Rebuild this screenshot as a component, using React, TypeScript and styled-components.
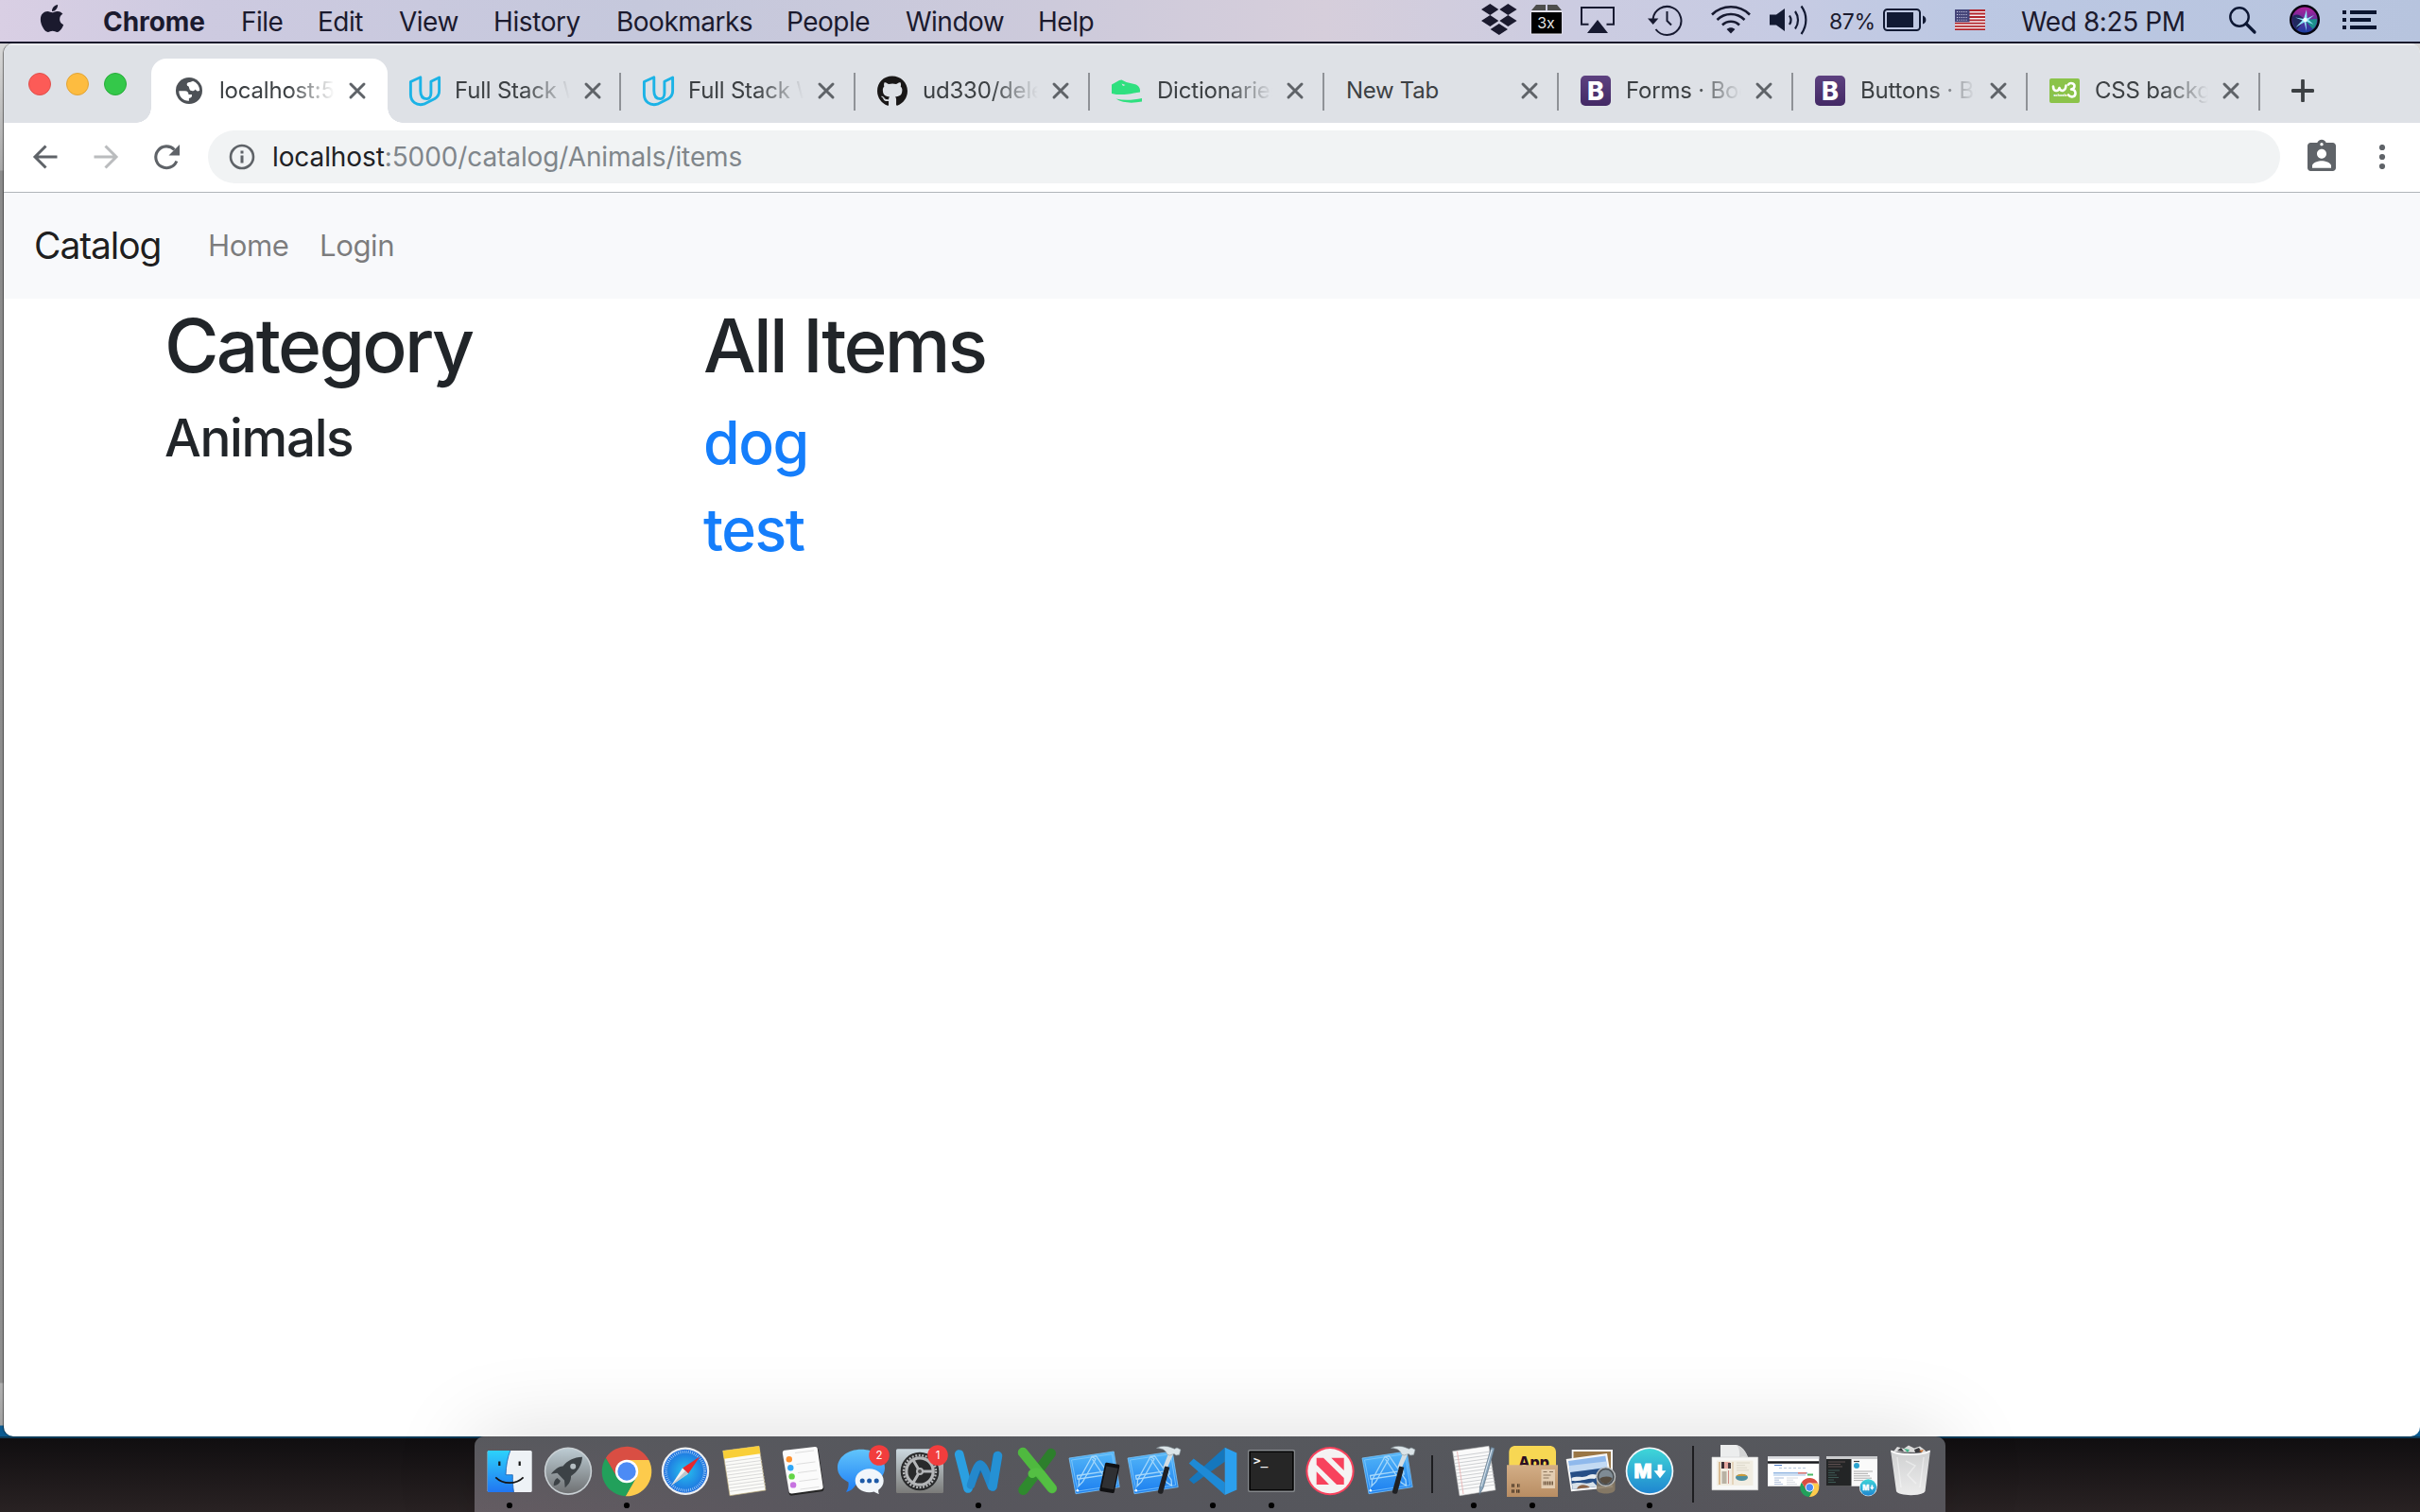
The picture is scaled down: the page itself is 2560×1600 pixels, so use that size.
import React from "react";
import styled, { createGlobalStyle } from "styled-components";
import { FaApple, FaGithub } from "react-icons/fa";
import { MdAssignmentInd } from "react-icons/md";

const GlobalStyle = createGlobalStyle`
  html, body { margin: 0; padding: 0; background: #1b181a; }
  * { box-sizing: border-box; }
  body { font-family: Inter, "Liberation Sans", sans-serif; overflow: hidden; }
`;

/* ---------- shell ---------- */

const Screen = styled.div`
  width: 2560px;
  height: 1600px;
  display: flex;
  flex-direction: column;
  overflow: hidden;
  background: #1b181a;
`;

const MenuBar = styled.header`
  display: flex;
  align-items: center;
  height: 46px;
  flex: none;
  padding: 0 46px 2px 41px;
  border-bottom: 2px solid #17162c;
  color: #1b1a2e;
  background: linear-gradient(90deg, #d9cfe4 0, #cdcae0 220px, #c5c8dc 680px, #cdcadb 1120px, #d6cedb 1400px, #cccce1 1660px, #c6cbe3 1900px, #bcc8e3 2080px, #b7c4de 2560px);
`;

const AppleMark = styled(FaApple)`
  width: 28px;
  height: 33px;
  margin: -4px 0 0;
`;

const MenuItem = styled.span<{ $gap: number; $w: number; $ls?: number; $bold?: boolean; $size?: number }>`
  flex: none;
  margin-left: ${(p) => p.$gap}px;
  padding-top: 3px;
  width: ${(p) => p.$w}px;
  font-size: ${(p) => p.$size ?? 28}px;
  line-height: 40px;
  font-weight: ${(p) => (p.$bold ? 700 : 400)};
  letter-spacing: ${(p) => p.$ls ?? -0.5}px;
  white-space: nowrap;
`;

const Spacer = styled.div`
  flex: 1;
`;

const StatusIcon = styled.svg<{ $gap: number }>`
  display: block;
  flex: none;
  margin-left: ${(p) => p.$gap}px;
  overflow: visible;
`;

const Desktop = styled.div`
  display: flex;
  height: 1474px;
  flex: none;
  background: linear-gradient(180deg, #d8d8d8 0, #a9a9a9 134px, #8b8b8b 135px, #8f8f8f 1417px, #b0b0b0 1418px, #a2a2a2 1462px, #0c5b90 1463px);
`;

const Window = styled.main`
  margin-left: 4px;
  flex: 1;
  display: flex;
  flex-direction: column;
  overflow: hidden;
  border-radius: 10px;
  background: #fff;
  box-shadow: -1px 0 1px rgba(0, 0, 0, 0.45);
`;

/* ---------- tab strip ---------- */

const TabStrip = styled.div`
  display: flex;
  height: 84px;
  flex: none;
  background: #dee1e6;
  border-top: 2px solid #eceef0;
`;

const Lights = styled.div`
  display: flex;
  gap: 16px;
  width: 156px;
  padding: 29px 0 0 26px;
  flex: none;
`;

const Light = styled.i<{ $c: string; $b: string }>`
  width: 24px;
  height: 24px;
  border-radius: 50%;
  background: ${(p) => p.$c};
  border: 1px solid ${(p) => p.$b};
`;

const Tab = styled.div<{ $active?: boolean; $w?: number }>`
  position: relative;
  display: flex;
  align-items: center;
  flex: none;
  width: ${(p) => p.$w ?? 248}px;
  height: ${(p) => (p.$active ? 68 : 40)}px;
  margin-top: ${(p) => (p.$active ? 14 : 29)}px;
  padding-left: ${(p) => (p.$active ? 24 : 23)}px;
  padding-bottom: ${(p) => (p.$active ? 0 : 2)}px;
  background: ${(p) => (p.$active ? "#fff" : "transparent")};
  border-radius: ${(p) => (p.$active ? "16px 16px 0 0" : "0")};
  border-right: ${(p) => (p.$active ? "0" : "2px solid #8f9297")};
  &::before, &::after {
    content: "";
    display: ${(p) => (p.$active ? "block" : "none")};
    position: absolute;
    bottom: 0;
    width: 16px;
    height: 16px;
  }
  &::before {
    left: -16px;
    background: radial-gradient(circle at 0 0, transparent 15.5px, #fff 16px);
  }
  &::after {
    right: -16px;
    background: radial-gradient(circle at 100% 0, transparent 15.5px, #fff 16px);
  }
`;

const Favicon = styled.svg`
  display: block;
  width: 33px;
  height: 32px;
  margin-right: 15px;
  flex: none;
  overflow: visible;
`;

const GithubMark = styled(FaGithub)`
  width: 32px;
  height: 33px;
  margin-right: 16px;
  flex: none;
  color: #191717;
`;

const TabTitle = styled.span<{ $w?: number; $fade?: boolean; $ls?: number }>`
  width: ${(p) => p.$w ?? 122}px;
  overflow: hidden;
  white-space: nowrap;
  font-size: 24px;
  line-height: 34px;
  letter-spacing: ${(p) => p.$ls ?? -0.2}px;
  color: #3c4043;
  -webkit-mask-image: ${(p) => (p.$fade === false ? "none" : "linear-gradient(90deg, #000 60%, transparent 100%)")};
  mask-image: ${(p) => (p.$fade === false ? "none" : "linear-gradient(90deg, #000 60%, transparent 100%)")};
`;

const CloseGlyph = styled.svg`
  width: 18px;
  height: 18px;
  margin-left: 15px;
  flex: none;
  overflow: visible;
`;

const NewTab = styled.svg`
  width: 24px;
  height: 24px;
  margin: 36px 0 0 33px;
  flex: none;
`;

/* ---------- address bar ---------- */

const Toolbar = styled.div`
  display: flex;
  align-items: center;
  height: 74px;
  flex: none;
  padding: 0 32px 2px 31px;
  border-bottom: 1px solid #b1b5ba;
`;

const NavGlyph = styled.svg<{ $gap?: number }>`
  width: 26px;
  height: 26px;
  margin-left: ${(p) => p.$gap ?? 0}px;
  flex: none;
  overflow: visible;
`;

const Omnibox = styled.div`
  display: flex;
  align-items: center;
  width: 2192px;
  height: 56px;
  margin-top: 1px;
  margin-left: 31px;
  padding-left: 23px;
  border-radius: 28px;
  background: #f1f3f4;
  flex: none;
`;

const Url = styled.span`
  margin-left: 19px;
  font-size: 28px;
  line-height: 40px;
  letter-spacing: -0.1px;
  color: #80868b;
  white-space: nowrap;
  b { font-weight: 400; color: #202124; }
`;

const ProfileBadge = styled(MdAssignmentInd)`
  width: 40px;
  height: 42px;
  margin: 0 0 0 24px;
  color: #5f6368;
  flex: none;
`;

const Kebab = styled.svg`
  width: 8px;
  height: 26px;
  margin: 0 0 0 40px;
  flex: none;
`;

/* ---------- page ---------- */

const SiteNav = styled.nav`
  display: flex;
  align-items: center;
  height: 112px;
  flex: none;
  padding: 0 32px;
  background: #f8f9fb;
  line-height: 60px;
`;

const Brand = styled.a`
  width: 184px;
  font-size: 39px;
  letter-spacing: -1.1px;
  color: rgba(0, 0, 0, 0.9);
`;

const NavLink = styled.a<{ $w: number }>`
  width: ${(p) => p.$w}px;
  font-size: 31.2px;
  letter-spacing: -0.45px;
  color: rgba(0, 0, 0, 0.5);
`;

const Columns = styled.section`
  display: grid;
  grid-template-columns: 570px 1fr;
  padding-left: 170px;
`;

const Column = styled.div`
  color: #212529;
  font-weight: 500;
`;

const H1 = styled.h1`
  margin: 0 0 16px;
  padding-top: 2px;
  font-size: 78.5px;
  line-height: 96px;
  font-weight: 500;
  letter-spacing: -2.7px;
`;

const H3 = styled.h3`
  margin: 0;
  font-size: 54.8px;
  line-height: 67px;
  font-weight: 500;
  letter-spacing: -1.35px;
`;

const H2 = styled.h2`
  margin: 0 0 16px;
  font-size: 62.6px;
  line-height: 76px;
  font-weight: 500;
  letter-spacing: -1.5px;
  color: #157efb;
`;

/* ---------- dock ---------- */

const Wallpaper = styled.footer`
  height: 80px;
  flex: none;
  display: flex;
  justify-content: center;
  border-top: 2px solid #0d3a57;
  background: linear-gradient(180deg, #100e10, #292223);
`;

const Dock = styled.div`
  position: relative;
  display: flex;
  width: 1556px;
  height: 80px;
  margin-top: -2px;
  padding: 0 6px;
  border-radius: 10px 10px 0 0;
  background: linear-gradient(180deg, rgba(86, 88, 93, 0.9), rgba(86, 82, 88, 0)), linear-gradient(90deg, #645c62, #58565d 25%, #55565c 60%, #56545a);
  box-shadow: 0 0 90px rgba(0, 0, 0, 0.15);
`;

const DockCell = styled.svg`
  display: block;
  width: 62px;
  height: 80px;
  flex: none;
  overflow: visible;
`;

const DockDivider = styled.i<{ $top: number; $h: number }>`
  width: 2px;
  height: ${(p) => p.$h}px;
  margin: ${(p) => p.$top}px 12px 0 14px;
  background: #1d1d20;
  flex: none;
`;

/* ---------- favicons ---------- */

const GlobeIcon = () => (
  <Favicon viewBox="0 0 33 32">
    <circle cx="16" cy="16" r="14" fill="#4d5156" />
    <path fill="#fff" d="M5.300 16.300h6.600c2.200 0 3.600 1.600 3.600 3.700h3.400c.8 2.200-.8 3.600-3 3.900v2.900C9.900 27 5.300 22.600 5.300 16.300z" />
    <path fill="#fff" d="M20.100 5.700c4.200 1.600 7 5.400 7.100 10-2.200 1.500-4 .4-4.300-1.200-1.600 2.400-5.300 2.200-6.200.3-.9-1.900-.4-3.600-2.600-4.100-1.200-2.400.5-3.600 2.900-3.600z" />
  </Favicon>
);

const UdacityIcon = () => (
  <Favicon viewBox="0 0 33 32">
    <path
      fill="none"
      stroke="#1cb3e6"
      strokeWidth="2.900"
      strokeLinejoin="round"
      d="M1.400 6.500L11.800 1.800V16c0 5.500 2.400 8.600 6.800 8.600 2.600 0 4.300-2.400 4.300-6V6.200L31.600 2v14.500c0 4-1.600 6-4.800 8L15.500 30.200C7.500 32.200 1.400 27.400 1.400 20z"
    />
  </Favicon>
);

const DinoIcon = () => (
  <Favicon viewBox="0 0 33 32">
    <path fill="#2fe07f" d="M0 9.500L8 5l2.500-.4 5 2.400 9.500 2.200c3.400 1.200 5.400 4 5 8.300-4.600.4-8 1.500-14 2.300-5.400.6-11 .4-16-.9z" />
    <path fill="#2fe07f" d="M4.500 24.600c9 1.900 18 1.400 27.500-.6v3.600c-9.600 1.600-20 1.900-27.500-3z" />
    <path d="M10.500 8.500l4 1.400-2.500 1.200z" fill="#dee1e6" />
  </Favicon>
);

const BoldText = styled.text`
  font-family: Inter, "Liberation Sans", sans-serif;
  font-weight: 800;
`;

const BootstrapIcon = () => (
  <Favicon viewBox="0 0 33 32">
    <defs>
      <linearGradient id="bs" x1="0" y1="0" x2="0" y2="1">
        <stop offset="0" stopColor="#5d4180" />
        <stop offset="1" stopColor="#432965" />
      </linearGradient>
    </defs>
    <rect width="32" height="32" rx="5" fill="url(#bs)" />
    <BoldText x="7" y="25.500" fontSize="27" fill="#fff">B</BoldText>
  </Favicon>
);

const W3Icon = () => (
  <Favicon viewBox="0 0 33 32">
    <rect y="3" width="32" height="26" rx="2" fill="#8bc34a" />
    <path
      d="M4 11.500c0 5.500 5.500 6 6.500 1.500 1 4.500 6.500 4 7-2.500M20 9.500c2-2.500 6.500-1.500 6.500 1.500 0 2-1.500 3.200-3.500 3.500 3 .2 4.500 2 4.500 4.200 0 4-5 5-7.500 1.800"
      fill="none"
      stroke="#fff"
      strokeWidth="2.600"
      strokeLinecap="round"
      strokeLinejoin="round"
    />
    <BoldText x="4.500" y="22" fontSize="3.600" fill="#fff">schools</BoldText>
  </Favicon>
);

const Close = () => (
  <CloseGlyph viewBox="0 0 18 18">
    <path d="M2 2l14 14M16 2L2 16" stroke="#5f6368" strokeWidth="3" strokeLinecap="round" />
  </CloseGlyph>
);

/* ---------- dock art ---------- */

const ChromeLogo = ({ cx = 31, cy = 37, s = 1 }: { cx?: number; cy?: number; s?: number }) => (
  <g transform={`translate(${cx} ${cy}) scale(${s})`}>
    <path fill="#fdcb4c" d="M23.400-12A26.300 26.300 0 0 1-1.300 26.270L10.390 6 0-12z" />
    <path fill="#22a05b" d="M-1.300 26.270A26.300 26.300 0 0 1-22.100-14.260L-10.390 6 10.390 6z" />
    <path fill="#d94e43" d="M-22.100-14.260A26.300 26.300 0 0 1 23.400-12L0-12-10.390 6z" />
    <circle r="12.200" fill="#fff" />
    <circle r="9.700" fill="#4c8bf5" />
  </g>
);

const MarkdownLogo = ({ cx = 31, cy = 36.7, s = 1 }: { cx?: number; cy?: number; s?: number }) => (
  <g transform={`translate(${cx} ${cy}) scale(${s})`}>
    <circle r="25.300" fill="#f4f6f8" />
    <circle r="23.600" fill="url(#md)" />
    <BoldText x="-16.600" y="7.200" fontSize="20" fill="#fff" stroke="#fff" strokeWidth="1">M</BoldText>
    <path d="M8.600-7h4.800v6.500h4L11 7.500 4.600-.5h4z" fill="#fff" />
  </g>
);

const Blueprint = () => (
  <g>
    <path d="M3 23l47.200-7 6 37.600L10 60.700z" fill="url(#blue)" stroke="#7cc4f8" strokeWidth=".8" />
    <path d="M5.500 25l43-6.400 5.200 33L12 58z" fill="none" stroke="#8fd0fb" strokeWidth=".7" />
    <g fill="none" stroke="#a5d8fb" strokeWidth="1.300">
      <path d="M27 21.500L13.500 46l-.5 6.500 4.500-4.600L31 24z" />
      <path d="M27 21.500l4.500-.8L49 46l.5 6-5-3L27.500 24" />
      <path d="M11.500 41.500l35-5.300.6 3.700-35 5.300z" />
    </g>
    <circle cx="11.800" cy="57.300" r="1.300" fill="#fff" />
  </g>
);

const XcodeArt = () => (
  <g>
    <Blueprint />
    <path d="M46.500 17l5 1-7 16-4.200-1.500z" fill="#d4dde2" />
    <path d="M42.300 31.500l5 1.200-7 26.500c-.8 2.500-5.700 1.800-5.400-1z" fill="#1f2023" />
    <path d="M33.500 12.500c4-3 12-2.600 17 0l2 .7 2.500-1.200 4 2-1.500 5.500-3.500.5-2-1.600-4.500 1.600-3-1c-1-4.500-5-6.500-11-6.500z" fill="#dbe4e8" stroke="#8c989e" strokeWidth=".6" />
  </g>
);

const BadgeText = styled.text`
  font-family: Inter, "Liberation Sans", sans-serif;
  font-size: 11.500px;
`;

const Badge = ({ n }: { n: string }) => (
  <g>
    <circle cx="50" cy="20" r="10.800" fill="#f23d3d" />
    <BadgeText x="50" y="24.200" textAnchor="middle" fill="#fff">{n}</BadgeText>
  </g>
);

const TerminalText = styled.text`
  font-family: "DejaVu Sans Mono", monospace;
  font-size: 13px;
  font-weight: 700;
`;

const TinyLines = ({ x, y, w, n, step, c }: { x: number; y: number; w: number; n: number; step: number; c: string }) => (
  <g stroke={c} strokeWidth=".8">
    {Array.from({ length: n }, (_, i) => (
      <path key={i} d={`M${x} ${y + i * step}h${w - ((i * 5) % 7)}`} />
    ))}
  </g>
);

const dockArt: Record<string, React.ReactNode> = {
  finder: (
    <g>
      <rect x="7.700" y="15" width="47" height="44" rx="1.500" fill="#eef2f6" />
      <path d="M9 15h22.800C29 22 27.300 31 27 40.700h7.300c0 7 .2 12 1.200 18.300H9c-.8 0-1.300-.5-1.300-1.300V16.300C7.700 15.500 8.200 15 9 15z" fill="url(#finder)" />
      <path d="M31.800 15C29 22 27.300 31 27 40.700h7.300c0 7 .2 12 1.200 18.300" fill="none" stroke="#1b5fae" strokeWidth=".8" />
      <path d="M20.300 26.500v4.500M41.700 26.500v4.500" stroke="#151515" strokeWidth="2.200" />
      <path d="M16.300 43.300c8 7.800 21.500 7.800 29.300 0" fill="none" stroke="#151515" strokeWidth="1.800" />
    </g>
  ),
  launchpad: (
    <g>
      <circle cx="31" cy="36.700" r="25.200" fill="#c9d0d4" />
      <circle cx="31" cy="36.700" r="23.600" fill="url(#launch)" />
      <g fill="#3c4246">
        <path d="M46 21.700C37 22 30 25.500 25.500 31.500c-5 .5-8.500 3.500-12.700 8.200l6.700-.9 7.500 7.700.7 7.800c4-3.500 6.600-7.400 6.300-12.300C41.500 37 45.500 30 46 21.700z" />
        <path d="M19.500 44c-3 1.500-3.800 5-3.800 8.300 3.500-.4 6-2 7.200-5.300z" />
      </g>
      <circle cx="36.200" cy="31.700" r="3" fill="#b5bec2" />
    </g>
  ),
  chrome: <ChromeLogo />,
  safari: (
    <g>
      <circle cx="31" cy="36.700" r="25.200" fill="#eef0f2" />
      <circle cx="31" cy="36.700" r="23" fill="url(#safari)" />
      <circle cx="31" cy="36.700" r="20.500" fill="none" stroke="#d8f0ff" strokeWidth="3" strokeDasharray=".7 1.450" opacity=".8" />
      <path d="M46.300 21.500L28 33.500l6 6z" fill="#e8272c" />
      <path d="M16 52L28 33.500l6 6z" fill="#f2f2f2" />
      <path d="M16 52l15-15.400 3 2.900z" fill="#bfc6cb" />
    </g>
  ),
  notes: (
    <g>
      <path d="M8.700 15.300l38.300-5L54 57l-38 5.700z" fill="#fbfbf8" stroke="#b7a878" strokeWidth=".7" />
      <path d="M8.700 15.300l38.300-5 1.300 8L10 23.700z" fill="#f9cf38" />
      <g stroke="#d0d0d0" strokeWidth=".8">
        {Array.from({ length: 10 }, (_, i) => (
          <path key={i} d={`M${11.200 + i * 0.55} ${27.200 + i * 3.450}l38-5.200`} />
        ))}
      </g>
    </g>
  ),
  reminders: (
    <g>
      <path d="M12 17l33-4.500c1.500 0 2.500.7 2.800 2L53.500 55c.2 2-.8 3-2.400 3.300L20 62.600c-2 .2-3-.7-3.300-2.300z" fill="#252525" />
      <path d="M12 14.800l32-3.800c1.500-.1 2.600.8 2.800 2.200l5.900 40c.2 1.700-.8 2.700-2.400 3l-30.500 4.200c-1.700.2-2.900-.6-3.200-2.200L9.900 18c-.2-1.800.6-3 2.100-3.200z" fill="#fbfbfb" />
      <circle cx="16.800" cy="24.300" r="3.200" fill="#ff922e" />
      <circle cx="18.300" cy="33.300" r="3.200" fill="#2fa7f7" />
      <circle cx="19.600" cy="42.400" r="3.200" fill="#63d546" />
      <circle cx="21.100" cy="51.400" r="3.200" fill="#c773e0" />
      <path d="M23 17.500l20-2.600M24.500 29.500l20-2.600M26 38.500l20-2.600M27.500 47.500l20-2.600M28.500 56l20-2.600" stroke="#d5d5d5" strokeWidth=".8" />
    </g>
  ),
  messages: (
    <g>
      <path d="M31 13.700c14 0 25 8.300 25 19.300S45 52 31 52c-2 0-4.300-.2-6-.6-2 3.300-5 6.600-10 7.400 2.300-3.300 3-7 2.500-10.300C10.500 45 6 40 6 33c0-11 11-19.300 25-19.300z" fill="url(#msg)" />
      <path d="M39.700 34.300c8.300 0 15 5.600 15 12.700 0 4-2.200 7.500-5.500 9.800 0 1.600 0 2.700.8 4.200-2.300-.6-4-1.600-5.300-2.400-1.600.4-3.300.6-5 .6-8.300 0-15-5.200-15-12.200s6.700-12.700 15-12.700z" fill="#f1f6fb" />
      <circle cx="32.200" cy="47" r="2.500" fill="#1d5aa8" />
      <circle cx="39.600" cy="47" r="2.500" fill="#1d5aa8" />
      <circle cx="47.200" cy="47" r="2.500" fill="#1d5aa8" />
      <Badge n="2" />
    </g>
  ),
  settings: (
    <g>
      <rect x="6" y="13.300" width="50" height="46.700" rx="1.500" fill="url(#prefs)" />
      <circle cx="31" cy="37" r="20.300" fill="#292a2b" />
      <circle cx="31" cy="37" r="17" fill="none" stroke="#b4b6b8" strokeWidth="2.400" strokeDasharray="2 1.560" />
      <circle cx="31" cy="37" r="14.200" fill="none" stroke="#b4b6b8" strokeWidth="3.200" />
      <circle cx="31" cy="37" r="4" fill="#b4b6b8" />
      <path d="M31 37h14M31 37l-7-12M31 37l-7 12" stroke="#b4b6b8" strokeWidth="3" />
      <circle cx="31" cy="37" r="2" fill="#4a4a4a" />
      <Badge n="1" />
    </g>
  ),
  word: (
    <g fill="none" strokeLinecap="round" strokeWidth="9.600">
      <path d="M32.500 30L20 54.500" stroke="#1466a5" />
      <path d="M51 21L46 53" stroke="#1466a5" />
      <path d="M10.700 19L20 55" stroke="#2b9fe0" />
      <path d="M23 51.500c3-9 6.500-22 10-22 3.600 0 8 14 12 23.500" stroke="#2488cb" strokeWidth="8.600" />
      <path d="M51.500 20.500L46 53" stroke="#2591d4" />
    </g>
  ),
  excel: (
    <g fill="none" strokeLinecap="round" strokeWidth="10.500">
      <path d="M45.800 18L31 38" stroke="#2d7f2c" />
      <path d="M31 38L16.500 56.800" stroke="#2f8a2e" />
      <path d="M16 17l30.800 38" stroke="#4fb93f" />
      <path d="M26 39.500c3-3 7.500-1.500 9.500.5l11.300 15" stroke="#54bf43" strokeWidth="9" />
    </g>
  ),
  simulator: (
    <g>
      <Blueprint />
      <path d="M43 27.700l12 2.100c1 .2 1.500.8 1.300 1.900l-5.500 27c-.2 1-.9 1.500-2 1.300L36.500 58c-1-.2-1.400-.9-1.200-1.900l5.700-27c.2-1 .9-1.600 2-1.400z" fill="#101012" />
      <path d="M42.300 31.500l12.300 2.300-4.500 22.400-12.600-2.300z" fill="#2f3033" />
    </g>
  ),
  xcode: <XcodeArt />,
  vscode: (
    <g>
      <path d="M5.700 45.700L43.700 11.700v15L10.700 50.300z" fill="#1577bd" />
      <path d="M5.700 28.500l5-5 33 25.300V62z" fill="#1e8ad6" />
      <path d="M43.700 11.700l12.600 5.800v39L43.700 62z" fill="#2ba0ee" />
    </g>
  ),
  terminal: (
    <g>
      <rect x="6" y="14" width="50" height="45" rx="2" fill="#85888c" />
      <rect x="7.300" y="15.500" width="47.400" height="42" rx="1" fill="#050505" />
      <rect x="9" y="17" width="44" height="39" fill="#262626" />
      <TerminalText x="11.700" y="30" fill="#f4f4f4">&gt;_</TerminalText>
    </g>
  ),
  news: (
    <g>
      <circle cx="31" cy="36.700" r="25.600" fill="#f8425d" />
      <circle cx="31" cy="36.700" r="23.600" fill="#f5f3f3" />
      <g fill="#f8425d">
        <path d="M16.700 22.700H24L45.700 44v7H38L16.700 30z" />
        <path d="M32.300 22.700h13.400V36z" />
        <path d="M16.700 37.300V51H30z" />
      </g>
    </g>
  ),
  textedit: (
    <g>
      <path d="M8.700 15.700L47 10.300l7 46.400-38 6z" fill="#fafafa" stroke="#c0c0c0" strokeWidth=".6" />
      <g stroke="#b9bcc0" strokeWidth=".7">
        {Array.from({ length: 11 }, (_, i) => (
          <path key={i} d={`M${10 + i * 0.55} ${21.500 + i * 3.500}l38.500-5.500`} />
        ))}
      </g>
      <path d="M13.500 16l6.500 45" stroke="#eaa5a5" strokeWidth=".7" />
      <path d="M49.500 11.500l3.500 1-12 42-4 7 .5-8z" fill="#8aa6bd" stroke="#56697a" strokeWidth=".6" />
      <path d="M50 14L39 53" stroke="#dbe7f0" strokeWidth="1" />
    </g>
  ),
  appcleaner: (
    <g>
      <path d="M6.300 31V17c0-4.500 2.700-7 7-7H49c4.300 0 7 2.500 7 7v14z" fill="#f7d753" />
      <BoldText x="16.300" y="32.500" fontSize="16" fill="#2a0e22">App</BoldText>
      <path d="M4 30.300h54V64H4z" fill="url(#box)" />
      <rect x="40.500" y="35" width="14.500" height="20" fill="#e3cdb2" />
      <path d="M42.500 37.500h4M49 37.500h4M42.500 41h8M42.500 44h6" stroke="#8a745c" strokeWidth="1" />
      <path d="M42.500 49.500h10.500" stroke="#6a523a" strokeWidth="4" strokeDasharray="1 .6" />
      <path d="M9 52h3M15 52h2.500M9 58h3M14 58h4" stroke="#4c3a28" strokeWidth="3.500" strokeDasharray="1.400 .5" />
    </g>
  ),
  preview: (
    <g>
      <path d="M10.700 14H54v35H10.700z" fill="#f3f3f3" />
      <path d="M12.500 16H52v28H12.500z" fill="#9a7645" />
      <path d="M4.700 24L48 18l6 36-44 4.300z" fill="#f8f8f8" />
      <path d="M7 26l39.300-5.600L48.500 34 9.200 40z" fill="#8fb9ec" />
      <path d="M8 31l39-4.500 1.300 6L9 38.500z" fill="#c3daf3" />
      <path d="M9 38l39.500-5 3 18.500-40 4.500z" fill="#274f86" />
      <path d="M10.500 44c7-3 12 1 18-3 4-2 8-1 11 1l-5 3c-7-1-13 3-24 2z" fill="#e9eef2" />
      <path d="M11 50c9-3 15 2 22-2l5 5-26.500 3z" fill="#d8e1e8" />
      <path d="M16 55.500c2-5 9-5.500 14-1.500z" fill="#8b6347" />
      <path d="M37 44v12c0 6 19.500 6 19.500 0V44z" fill="#8b7c66" opacity=".9" />
      <circle cx="46.700" cy="42.700" r="9.800" fill="#4b5054" stroke="#b9bcbe" strokeWidth="1.400" />
      <circle cx="46.700" cy="42.700" r="7.400" fill="#7f8b94" />
      <path d="M40 45c4-3 9-3 13.500-1-1 3.600-3.600 6-6.800 6-3.300 0-6-2-6.700-5z" fill="#564c40" />
    </g>
  ),
  macdown: <MarkdownLogo />,
  document: (
    <g>
      <path d="M16 9h16.700c6 1.500 9.500 6 12.600 13.700V30H16z" fill="#eceded" />
      <path d="M32.700 9c3.600 3 3.600 8 3.500 13 3-1 6-1 9.100.7C43 16 39 10.500 32.700 9z" fill="#d3d4d5" />
      <path d="M7 22h48.700v34.700H7z" fill="#f7f7f6" stroke="#d2d2d2" strokeWidth=".6" />
      <path d="M12 25.500h38.500V52H12z" fill="#f1ede2" />
      <path d="M14 27h2v24h-2zM28.500 27h1v24h-1z" fill="#d9bb93" />
      <path d="M17 27h3v7h-3z" fill="#3c2f33" />
      <path d="M20 27h6v7h-6z" fill="#e6a9a0" />
      <path d="M24 28h3v6h-3z" fill="#4a3c40" />
      <path d="M17.500 37h5v13h-5z" fill="#b9b2a4" />
      <path d="M24 36h1v14h-1z" fill="#d08c86" />
      <ellipse cx="38.500" cy="43.500" rx="6.500" ry="3.400" fill="#4f8fa0" />
      <path d="M32.500 42c3-3 9-3 12 0z" fill="#c99a3a" />
      <TinyLines x={33} y={28} w={14} n={4} step={2.600} c="#d8d2c4" />
    </g>
  ),
  chromeWindow: (
    <g>
      <path d="M4 21.300h54.300v31.400H4z" fill="#fff" />
      <path d="M4 21.300h54.300v2.400H4z" fill="#d7d9dd" />
      <path d="M4 26.300h54.300v2.500H4z" fill="#17191c" />
      <path d="M11 30.500h8" stroke="#4b79c4" strokeWidth="1" />
      <path d="M10 38.800h36" stroke="#8fb4e0" strokeWidth="1.500" />
      <path d="M36 38.800h9" stroke="#e0796f" strokeWidth="1.500" />
      <path d="M46 40.500h6" stroke="#4cb866" strokeWidth="2" />
      <path d="M10 41h34" stroke="#cfe0f3" strokeWidth="2" />
      <TinyLines x={11} y={44} w={10} n={4} step={2.200} c="#9aaed0" />
      <TinyLines x={24} y={44} w={12} n={4} step={2.200} c="#cdd2da" />
      <path d="M16 33.500h30" stroke="#a8bdd8" strokeWidth=".8" strokeDasharray="3 2" />
      <ChromeLogo cx={48.300} cy={54} s={0.38} />
    </g>
  ),
  macdownWindow: (
    <g>
      <path d="M4 21.300h54v31.400H4z" fill="#fafafa" />
      <path d="M4 21.300h54v2.700H4z" fill="#c9cacc" />
      <path d="M4 24h26.500v28.700H4z" fill="#232526" />
      <TinyLines x={6} y={27} w={18} n={3} step={2.500} c="#6d5a5a" />
      <TinyLines x={6} y={36} w={12} n={6} step={2.500} c="#43665f" />
      <path d="M33 26.500h6" stroke="#444" strokeWidth="1.200" />
      <circle cx="36" cy="31" r="3" fill="#2aa3cf" />
      <TinyLines x={33} y={37} w={20} n={5} step={2.400} c="#9a9a9a" />
      <MarkdownLogo cx={48.300} cy={54} s={0.37} />
    </g>
  ),
  trash: (
    <g>
      <path d="M13 16l4-5 7 2 5-3.500 6 3 6-2 4 3 4 4z" fill="#dcdcdc" />
      <path d="M17 15l4-3 3 4zM35 14l5-2 3 5h-7z" fill="#3a3a3e" />
      <path d="M24 13l4 4 2-3z" fill="#42b487" />
      <path d="M40 15l3 2 2-3z" fill="#d37838" />
      <path d="M10 14.500c8 4.500 34 4.500 42 0L46.500 58c-2 5.500-28.500 5.500-30.500 0z" fill="url(#bin)" />
      <path d="M10.500 15.500c8 5 33 5 41 0" fill="none" stroke="#fafafa" strokeWidth="1.600" />
      <path d="M17 22l4 32M45 22l-4 32M26 26l10 5-8 10 9 9" fill="none" stroke="#fff" strokeWidth="1.500" opacity=".4" />
    </g>
  ),
};

type DockEntry = { art: string; running?: boolean };

const apps: DockEntry[] = [
  { art: "finder", running: true },
  { art: "launchpad" },
  { art: "chrome", running: true },
  { art: "safari" },
  { art: "notes" },
  { art: "reminders" },
  { art: "messages" },
  { art: "settings" },
  { art: "word", running: true },
  { art: "excel" },
  { art: "simulator" },
  { art: "xcode" },
  { art: "vscode", running: true },
  { art: "terminal", running: true },
  { art: "news" },
  { art: "xcode" },
];
const recents: DockEntry[] = [
  { art: "textedit", running: true },
  { art: "appcleaner", running: true },
  { art: "preview" },
  { art: "macdown", running: true },
];
const minimized: DockEntry[] = [{ art: "document" }, { art: "chromeWindow" }, { art: "macdownWindow" }, { art: "trash" }];

const DockGroup = ({ items }: { items: DockEntry[] }) => (
  <>
    {items.map((it, i) => (
      <DockCell key={i} viewBox="0 0 62 80">
        {dockArt[it.art]}
        {it.running && <circle cx="31" cy="73" r="3.100" fill="#000" />}
      </DockCell>
    ))}
  </>
);

const Gradient = ({ id, a, b, radial }: { id: string; a: string; b: string; radial?: boolean }) =>
  radial ? (
    <radialGradient id={id}>
      <stop offset="0" stopColor={a} />
      <stop offset="1" stopColor={b} />
    </radialGradient>
  ) : (
    <linearGradient id={id} x1="0" y1="0" x2="0" y2="1">
      <stop offset="0" stopColor={a} />
      <stop offset="1" stopColor={b} />
    </linearGradient>
  );

const GradientSheet = styled.svg`
  position: absolute;
  width: 0;
  height: 0;
`;

/* ---------- menu bar icons ---------- */

const StatusIcons = () => (
  <>
    <StatusIcon $gap={0} width="38" height="34" viewBox="0 0 38 34">
      <g fill="#1b1a2e">
        <path d="M9.300 0l9 6-9 6-9.300-6zM28.300 0l9.300 6-9.300 6-9-6zM9.300 12l9 6-9 6L0 18zM28.300 12l9.300 6-9.300 6-9-6zM18.800 21l9.200 6-9.200 6-9.200-6z" />
      </g>
    </StatusIcon>
    <StatusIcon $gap={15} width="32" height="32" viewBox="0 0 32 32">
      <path d="M5 0h10v6H0zM17 0h10l5 6H17z" fill="#4d4e4c" />
      <path d="M-.5 6.500h33v25h-33z" fill="#e9e7f0" />
      <path d="M0 8h32v22.500H0z" fill="#000" />
      <text x="15.500" y="24.500" fontSize="16" fill="#e4e4e4" textAnchor="middle">3x</text>
    </StatusIcon>
    <StatusIcon $gap={20} width="36" height="30" viewBox="0 0 36 30">
      <path d="M8.500 19.800H1V2h34v17.800h-7.500" fill="none" stroke="#171a30" strokeWidth="2" />
      <path d="M18 15l11 14H7z" fill="#171a30" />
    </StatusIcon>
    <StatusIcon $gap={35} width="36" height="32" viewBox="0 0 36 32">
      <path d="M5.600 15A15 15 0 1 1 8.500 26" fill="none" stroke="#171a30" strokeWidth="2" />
      <path d="M0 14.500h11.400L5.700 21z" fill="#171a30" />
      <path d="M20.500 7v10l4.500 4.500" fill="none" stroke="#171a30" strokeWidth="2" />
    </StatusIcon>
    <StatusIcon $gap={31} width="42" height="30" viewBox="0 0 42 30">
      <g fill="none" stroke="#171a30" strokeWidth="2.600">
        <path d="M1 9.500C12 -1.500 30-1.500 41 9.500" />
        <path d="M6.500 15C14.500 7 27.500 7 35.500 15" />
        <path d="M12 20.500C17 15.500 25 15.500 30 20.500" />
      </g>
      <path d="M16.600 25c2.500-2.200 6.300-2.200 8.800 0L21 29.500z" fill="#171a30" />
    </StatusIcon>
    <StatusIcon $gap={20} width="42" height="32" viewBox="0 0 42 32">
      <path d="M0 10.500h7L16 4v24l-9-6.500H0z" fill="#131a32" />
      <g fill="none" stroke="#131a32" strokeWidth="2.200">
        <path d="M21 11.500c2 3 2 6.500 0 9.500" />
        <path d="M27 7c4 5.500 4 13 0 18.500" />
        <path d="M33.500 1.500c6.500 8.500 6.500 20.500 0 29.500" />
      </g>
    </StatusIcon>
    <MenuItem $gap={21} $w={48} $size={23} $ls={-0.4}>87%</MenuItem>
    <StatusIcon $gap={9} width="46" height="24" viewBox="0 0 46 24">
      <rect x="1" y="1" width="38" height="22" rx="3.500" fill="none" stroke="#111a33" strokeWidth="2" />
      <rect x="4" y="4" width="28" height="16" fill="#111a33" />
      <path d="M42 7.500c4.500 1 4.500 8 0 9z" fill="#111a33" />
    </StatusIcon>
    <StatusIcon $gap={30} width="32" height="22" viewBox="0 0 32 22">
      <path d="M0 0h32v22H0z" fill="#f4f1f2" />
      <path d="M0 1h32M0 4.500h32M0 8h32M0 11.300h32M0 14.600h32M0 17.900h32M0 21.200h32" stroke="#b3262c" strokeWidth="1.800" />
      <path d="M0 0h15.500v13.300H0z" fill="#45457a" />
      <path d="M2 2.500h12M2 5.500h12M2 8.500h12M2 11.200h12" stroke="#dcdcee" strokeWidth="1" strokeDasharray="1 1.400" />
    </StatusIcon>
  </>
);

export default function App() {
  return (
    <Screen>
      <GlobalStyle />
      <GradientSheet>
        <defs>
          <Gradient id="finder" a="#2dd2fb" b="#2176f2" />
          <Gradient id="launch" a="#bccbd2" b="#6f7173" />
          <Gradient id="safari" a="#27c3ee" b="#1e6fdf" radial />
          <Gradient id="msg" a="#62c5fb" b="#1e7ef5" />
          <Gradient id="prefs" a="#ccd9e0" b="#7b7b79" />
          <Gradient id="blue" a="#54b7f8" b="#1c7ff0" />
          <Gradient id="box" a="#d3ae86" b="#b88d63" />
          <Gradient id="bin" a="#cfd0d1" b="#ececec" />
          <Gradient id="md" a="#3fd6d8" b="#1f86d0" />
          <Gradient id="siri" a="#b01f9a" b="#1a3fa0" />
        </defs>
      </GradientSheet>

      <MenuBar>
        <AppleMark />
        <MenuItem $gap={40} $w={107} $ls={-0.05} $bold>Chrome</MenuItem>
        <MenuItem $gap={39} $w={43}>File</MenuItem>
        <MenuItem $gap={38} $w={49}>Edit</MenuItem>
        <MenuItem $gap={37} $w={63}>View</MenuItem>
        <MenuItem $gap={37} $w={91} $ls={-0.4}>History</MenuItem>
        <MenuItem $gap={39} $w={142}>Bookmarks</MenuItem>
        <MenuItem $gap={38} $w={88}>People</MenuItem>
        <MenuItem $gap={38} $w={102}>Window</MenuItem>
        <MenuItem $gap={38} $w={59}>Help</MenuItem>
        <Spacer />
        <StatusIcons />
        <MenuItem $gap={38} $w={173} $ls={-0.4}>Wed 8:25 PM</MenuItem>
        <StatusIcon $gap={47} width="30" height="28" viewBox="0 0 30 28">
          <circle cx="11" cy="11" r="9.700" fill="none" stroke="#0c1733" strokeWidth="2.400" />
          <path d="M18 18l9 9" stroke="#0c1733" strokeWidth="3.200" strokeLinecap="round" />
        </StatusIcon>
        <StatusIcon $gap={34} width="32" height="32" viewBox="0 0 32 32">
          <circle cx="16" cy="16" r="16" fill="#05060f" />
          <circle cx="16" cy="16" r="13.600" fill="url(#siri)" />
          <path d="M3 13c3-4 8-3 13 3L8 26.500C4.500 23.500 2.500 18.500 3 13z" fill="#20285e" />
          <path d="M16 16l13-1c.4 3.500-1 8-4.500 10.700z" fill="#1c8f8c" />
          <path d="M6 13.500L15 15l3-10 .5 9.500L26 11l-6 5 5.500 5-8-3.500L18 28l-2.500-9.500L6.500 24l7-7.500z" fill="#8fe6f7" />
          <circle cx="16.500" cy="16" r="2.300" fill="#effcff" />
        </StatusIcon>
        <StatusIcon $gap={24} width="36" height="20" viewBox="0 0 36 20">
          <path d="M0 2h4M8 2h28M0 10h4M8 10h22M0 18h4M8 18h28" stroke="#0a1530" strokeWidth="4" />
        </StatusIcon>
      </MenuBar>

      <Desktop>
        <Window>
          <TabStrip>
            <Lights>
              <Light $c="#fc5b57" $b="#e0504c" />
              <Light $c="#fdbc40" $b="#e1a436" />
              <Light $c="#34c84a" $b="#28ad3b" />
            </Lights>
            <Tab $active $w={250}>
              <GlobeIcon />
              <TabTitle>localhost:5000</TabTitle>
              <Close />
            </Tab>
            <Tab $w={247}>
              <UdacityIcon />
              <TabTitle>Full Stack Web</TabTitle>
              <Close />
            </Tab>
            <Tab>
              <UdacityIcon />
              <TabTitle>Full Stack Web</TabTitle>
              <Close />
            </Tab>
            <Tab>
              <GithubMark />
              <TabTitle>ud330/delete</TabTitle>
              <Close />
            </Tab>
            <Tab>
              <DinoIcon />
              <TabTitle>Dictionaries</TabTitle>
              <Close />
            </Tab>
            <Tab>
              <TabTitle $w={170} $fade={false} $ls={-0.3}>New Tab</TabTitle>
              <Close />
            </Tab>
            <Tab>
              <BootstrapIcon />
              <TabTitle>Forms · Bootstrap</TabTitle>
              <Close />
            </Tab>
            <Tab>
              <BootstrapIcon />
              <TabTitle>Buttons · Bootstrap</TabTitle>
              <Close />
            </Tab>
            <Tab $w={246}>
              <W3Icon />
              <TabTitle $w={120}>CSS background</TabTitle>
              <Close />
            </Tab>
            <NewTab viewBox="0 0 24 24">
              <path d="M12 1.500v21M1.500 12h21" stroke="#3c4043" strokeWidth="3.800" strokeLinecap="round" />
            </NewTab>
          </TabStrip>

          <Toolbar>
            <NavGlyph viewBox="0 0 26 26">
              <path d="M25.500 13H2.500M13.500 1.500L2 13l11.500 11.500" fill="none" stroke="#5f6368" strokeWidth="3" />
            </NavGlyph>
            <NavGlyph $gap={38} viewBox="0 0 26 26">
              <path d="M.5 13h23M12.500 1.500L24 13 12.500 24.500" fill="none" stroke="#babcbe" strokeWidth="3" />
            </NavGlyph>
            <NavGlyph $gap={38} viewBox="0 0 26 26">
              <path d="M23.800 17.500A11.400 11.400 0 1 1 21.500 5.500" fill="none" stroke="#5f6368" strokeWidth="3.100" />
              <path d="M27 0v11.500H15.500z" fill="#5f6368" />
            </NavGlyph>
            <Omnibox>
              <NavGlyph viewBox="0 0 26 26">
                <circle cx="13" cy="13" r="12" fill="none" stroke="#5f6368" strokeWidth="2.600" />
                <path d="M13 11.500v8" stroke="#5f6368" strokeWidth="3" />
                <path d="M13 6.500v3" stroke="#5f6368" strokeWidth="3" />
              </NavGlyph>
              <Url><b>localhost</b>:5000/catalog/Animals/items</Url>
            </Omnibox>
            <ProfileBadge />
            <Kebab viewBox="0 0 8 26">
              <circle cx="4" cy="3" r="3.100" fill="#5f6368" />
              <circle cx="4" cy="13" r="3.100" fill="#5f6368" />
              <circle cx="4" cy="23" r="3.100" fill="#5f6368" />
            </Kebab>
          </Toolbar>

          <SiteNav>
            <Brand>Catalog</Brand>
            <NavLink $w={118}>Home</NavLink>
            <NavLink $w={90}>Login</NavLink>
          </SiteNav>

          <Columns>
            <Column>
              <H1>Category</H1>
              <H3>Animals</H3>
            </Column>
            <Column>
              <H1>All Items</H1>
              <H2>dog</H2>
              <H2>test</H2>
            </Column>
          </Columns>
        </Window>
      </Desktop>

      <Wallpaper>
        <Dock>
          <DockGroup items={apps} />
          <DockDivider $top={20} $h={40} />
          <DockGroup items={recents} />
          <DockDivider $top={10} $h={60} />
          <DockGroup items={minimized} />
        </Dock>
      </Wallpaper>
    </Screen>
  );
}
